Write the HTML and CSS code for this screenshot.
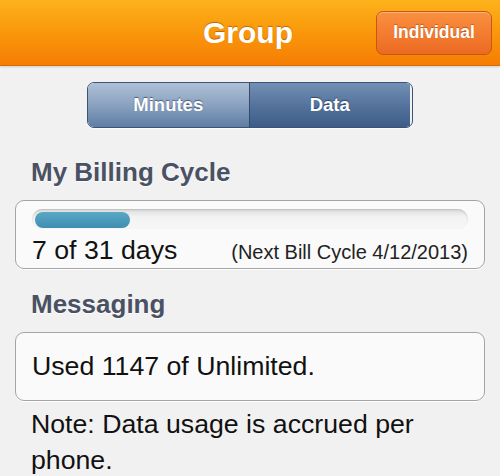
FILE: index.html
```html
<!DOCTYPE html>
<html>
<head>
  <title>Usage - Group</title>
  <link rel="stylesheet" href="styles.css">
</head>
<body>

  <div class="topbar">
    <span></span>
    <h1 class="title">Group</h1>
    <button class="btn-individual">Individual</button>
  </div>

  <div class="segments">
    <button class="seg seg-minutes">Minutes</button>
    <button class="seg seg-data">Data</button>
  </div>

  <div class="content">
    <h2 class="heading heading-billing">My Billing Cycle</h2>
    <div class="box box-billing">
      <div class="track"><div class="fill" style="width: 22%;"></div></div>
      <div class="cycle-row">
        <span class="days">7 of 31 days</span>
        <span class="next">(Next Bill Cycle 4/12/2013)</span>
      </div>
    </div>

    <h2 class="heading heading-msg">Messaging</h2>
    <div class="box box-msg">Used 1147 of Unlimited.</div>

    <p class="note">Note: Data usage is accrued per phone.</p>
  </div>

</body>
</html>
```

FILE: styles.css
```css
body{
margin: 0;
background-color: #f1f1f1;
color: #111;
font-family: "Liberation Sans", Arial, sans-serif;
}
.topbar{
height: 65px;
display: grid;
grid-template-columns: 1fr auto 1fr;
align-items: center;
background: linear-gradient(#fdb21c, #fa9a0c 45%, #f67d04);
border-bottom: 1px solid #d86a08;
box-shadow: 0 1px 2px rgba(0,0,0,0.15);
}
.title{
margin: 0 0 0 -4px;
font-size: 30px;
font-weight: bold;
color: white;
text-shadow: 0 -1px 1px rgba(150,70,0,0.6);
}
.btn-individual{
justify-self: end;
margin-right: 8px;
width: 116px;
height: 44px;
border: 1px solid #c9570f;
border-radius: 7px;
background: linear-gradient(#fa9040, #ec6a22);
box-shadow: inset 0 1px 0 rgba(255,255,255,0.35);
color: white;
font-family: "Liberation Sans", Arial, sans-serif;
font-size: 17.5px;
font-weight: bold;
text-shadow: 0 -1px 1px rgba(140,50,0,0.5);
padding: 0;
}
.segments{
width: 322px;
height: 44px;
margin: 16px auto 0 auto;
padding-right: 2px;
display: flex;
border: 1px solid #3d5275;
border-radius: 7px;
overflow: hidden;
box-shadow: 0 1px 1px rgba(255,255,255,0.8);
}
.seg{
flex: 1;
border: 0;
padding: 0;
color: white;
font-family: "Liberation Sans", Arial, sans-serif;
font-size: 18.5px;
font-weight: bold;
text-shadow: 0 -1px 1px rgba(20,40,70,0.6);
}
.seg-minutes{
background: linear-gradient(#aec0d6, #8aa2c0 50%, #5e7da3);
border-right: 1px solid #34496b;
}
.seg-data{
background: linear-gradient(#7290b5, #55739c 50%, #3d5d88);
}
.content{
padding: 0 15px;
}
.heading{
margin: 0 0 0 16px;
font-size: 26px;
line-height: 30px;
font-weight: bold;
color: #4a5163;
text-shadow: 0 1px 0 white;
}
.heading-billing{
margin-top: 29px;
}
.heading-msg{
margin-top: 20px;
}
.box{
border: 1px solid #a5a5a5;
border-radius: 9px;
background-color: #fafafa;
box-shadow: 0 1px 0 white;
}
.box-billing{
margin-top: 13px;
padding: 8px 16px 1px 16px;
}
.track{
height: 20px;
padding: 3px 3px 1px 3px;
box-sizing: border-box;
border-radius: 10px;
background: linear-gradient(#dcdcdc, #f3f3f3 40%, #f7f7f7);
box-shadow: inset 0 1px 2px rgba(0,0,0,0.15);
}
.fill{
height: 16px;
border-radius: 8px;
background: linear-gradient(#5aa8c6, #3f8db0);
}
.cycle-row{
margin-top: 6px;
display: flex;
justify-content: space-between;
align-items: baseline;
line-height: 30px;
}
.days{
font-size: 26.7px;
}
.next{
font-size: 20px;
color: #222;
}
.box-msg{
margin-top: 13px;
padding: 18px 16px 19px 16px;
font-size: 26.7px;
line-height: 30px;
}
.note{
margin: 5px 0 0 16px;
padding-right: 40px;
font-size: 26.7px;
line-height: 36px;
}
```
